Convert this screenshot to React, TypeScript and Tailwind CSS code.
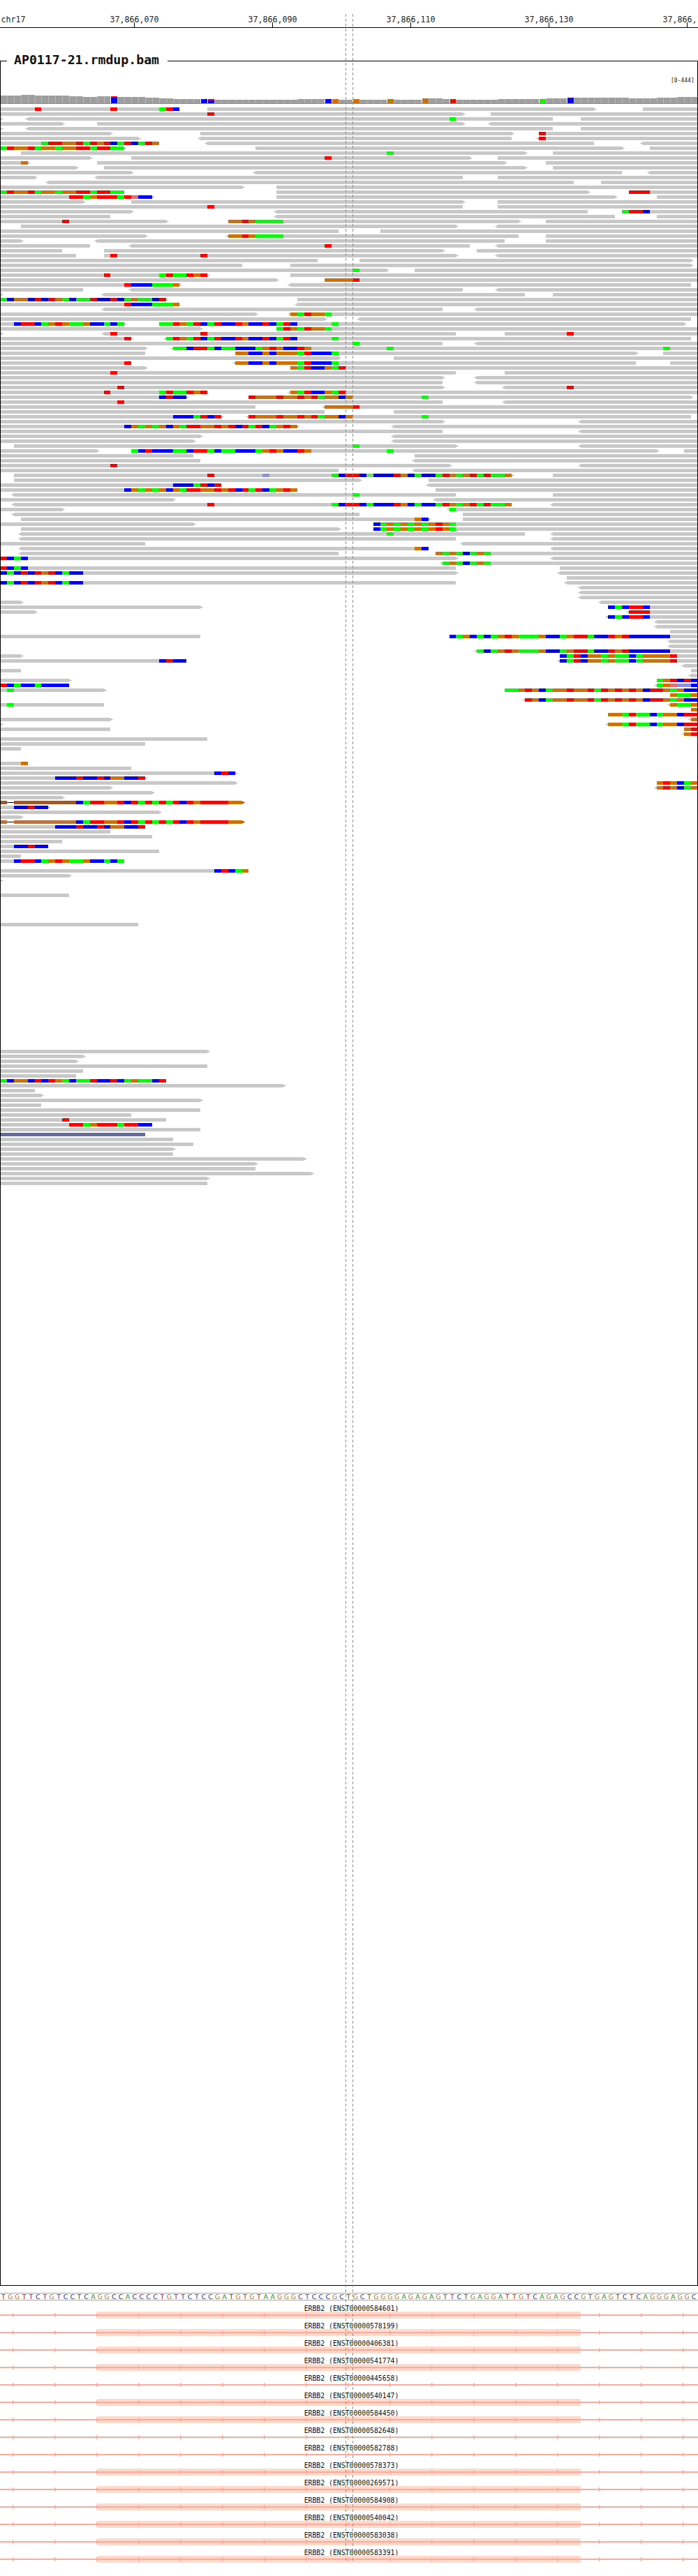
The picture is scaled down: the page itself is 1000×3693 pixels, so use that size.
const COLORS: Record<string, string> = {
  R: '#ff0000',
  G: '#00ff00',
  B: '#0000ff',
  O: '#d17105',
  r: '#e07070',
  b: '#8f8fdc',
  g: '#66e066',
  n: '#a0582a',
  m: '#c0723e',
  s: '#656a9b',
}
const READ_GRAY = '#c8c8c8'

// Alignment rows, one string per 7px line. Coordinates are base indices:
// "a-b" read, "<" / ">" strand tail, "k:RGB" mismatch cells from base k,
// "~k" deletion line, "t35n" coloured tail
const ROWS: string[] = [
  '0-26 5:R 16:R 23:GRB 30-86> 93-101',
  '0-67> 30:R 71-101',
  '0-0> <4-80 65:G 84-101',
  '0-9> 14-67> <71-101',
  '0-0> <4-80 84-101',
  '0-16> 29-74> 78-101 78:R',
  '0-20> <29-74 <78-101 78:R',
  '0-23 6:GRROORGRORBGRBGRO <30-86 <93-101',
  '0-18> 0:GROORGOOGOORRGRRGG 37-90> 94-101',
  '3-76> 56:G 80-101',
  '0-13> 19-68> 47:R 72-101',
  '0-4> 3:O 14-73> 79-101',
  '0-11> 15-76> 80-101',
  '0-19> <37-90 <94-101',
  '0-5> <14-67 72-101',
  '<7-83 87-101',
  '0-35> 40-101',
  '0-18 0:GROORGOOGOORRGRRGG 40-85> 91-101 91:RRR',
  '0-22> 10:RRGORRRGRrBB 40-89> 95-101',
  '0-12> 19-67> 72-101',
  '0-67 30:R 72-101',
  '0-19> <40-85 90-101 90:GRRB',
  '0-16 <40-89 95-101',
  '0-24> 9:R 33-75> 33:OOROGGGG 79-101',
  '3-66> <72-101',
  '0-49 55-101',
  '0-21> <33-75 33:OOROGGGG 79-101',
  '0-3> <14-73 79-101',
  '0-13 <19-68 47:R <72-101',
  '0-9 15-64> 69-101',
  '0-11 15-66> 16:R 29:R <72-101',
  '0-46 52-100>',
  '0-35 42-100>',
  '0-56> 51:G 60-101',
  '0-30> 15:R 23:GRGGROR 42-101',
  '0-40> 47-101 47:OOOOR',
  '0-26> 18:RBBBGGGO <42-100',
  '0-12 <19-67 <72-101',
  '0-0> <15-76 80-101',
  '0-24> 0:GBOOBRBROGBGGRBBRBGOGGBR 43-101',
  '0-26 18:RBBBGGGO <43-101',
  '<15-64 <69-101',
  '0-37> <42-101 42:OGROOG',
  '0-47> <52-100',
  '0-18> 2:BRRBGOROGGOBBGBG 23-99> 23:GGROGRBGRBBROBBRBGRB 48:G',
  '0-29> 40-101 40:GROGROOG',
  '0-0> <15-66 16:R 29:R 73-101 82:R',
  '0-19> 18:R <24-100 24:GROGRBGRBBROBBRBGRB 48:G',
  '0-64 51:G <69-101',
  '0-21> <25-101 25:GGBRRGBGGBBBGOROBBRO 56:G 96:G',
  '0-21 34-92> 34:OOBBOBOOOGRBBBG 96-101',
  '0-49> 57-101',
  '0-19 18:R <34-92 34:OOBBOBOOOGRBBBG 97-101',
  '0-21> 42-101 42:OGRBBOGR',
  '0-66 16:R 73-101',
  '0-64> <69-101',
  '0-64 <69-101',
  '0-64> 17:R <73-101 82:R',
  '0-30 15:R 23:GRGGROR <42-101 42:OGRBBOGR',
  '0-27> 23:BRBB 36-100> 36:ROOOROORORGOOBO 61:G',
  '0-64 17:R <73-101',
  '0-37 <47-101 47:OOOOR',
  '0-47 57-101',
  '0-32> 25:BBBGRBR <36-100 36:ROOOROORORGOOBO 61:G',
  '0-64> <84-101',
  '0-43> 18:BOGOGOBOGRROORORBRGRBGORO <57-101',
  '0-64 <84-101',
  '0-29> <57-101',
  '0-28> <57-101',
  '2-66> 51:G <84-101',
  '0-14> 19-95> 19:GBRBBBGGBRRGBGGBBBGOROBBRO 56:G 99-101',
  '0-28 60-101',
  '0-29 <60-101',
  '0-65> 16:R <84-101',
  '0-49 <60-101',
  '2-74> 30:R 38:b 48:GBRRBgBBBROBGBBGROGORGRGGO 80-101',
  '2-52> 62-101',
  '0-32 25:BBBGRBR <62-101',
  '0-43 18:BOGOGOBOGRROORORBRGRBGORO 63-101',
  '<2-66 51:G 80-101',
  '0-25> <63-101',
  '<2-74 30:R 48:GBRRBGBBBROBGBBGROGORGRGGO <80-101',
  '0-9> <65-101 65:G',
  '<2-52 67-101',
  '3-62> 60:OB 67-101',
  '0-28> 54-101 54:BGOGOGOGOROG',
  '3-49> 54-101 54:BGOGOGOGOROG',
  '<3-76 56:G <80-101',
  '<3-66 <80-101',
  '0-21 <67-101',
  '<3-62 60:OB <80-101',
  '<3-49 63-101 63:OGOGBGOG',
  '0-66> 0:RBGB <80-101',
  '<64-101 64:GOGBGOG',
  '0-66 0:RBGB 81-101',
  '0-66> 0:BGBRBRORBGBB <81-101',
  '82-101',
  '0-66 0:BGBRBRORBGBB <82-101',
  '<84-101',
  '<84-101',
  '<84-101',
  '0-3> <87-101',
  '0-29> 88-101 88:BGBRRB',
  '0-5> <91-101 91:RRR',
  '<88-101 88:BGBRRB',
  '<95-101',
  '<95-101',
  '97-101',
  '0-29 65-101 65:BGOBGBGOROGGGOBBGORRGBBRORBBBBBB',
  '<97-101',
  '<97-101',
  '<69-101 69:GBGOROGGGOBBGORRGBBRORBBBBBB',
  '0-3> 81-101 81:BGRBOOGOGGBGOOOOR',
  '0-27 23:BRBB <81-101 81:BGRBOOGOGGBGOOOOR',
  '<99-101',
  '0-3 100-101',
  '<100-101',
  '0-10> 95-101 95:GORBRB',
  '0-10 0:RBGBBGBBBB <95-101 95:GOrbbB',
  '0-15> 1:G 73-101 73:GGOROBGOOROORGROROROBRROGOBB',
  '97-101 97:OGGO',
  '<76-101 76:ROBGOOROORGROROROBRROGOBB',
  '0-15 1:G <97-101 97:OGGO',
  '100-101 100:O',
  '88-101 88:OOGRGGBGOOBRR',
  '0-16> <100-101 100:O',
  '0-0> <88-101 88:OOGRGGBGOOBRR',
  '0-16 99-101 99:OR',
  '<99-101 99:OR',
  '0-30',
  '0-21',
  '0-3',
  '',
  '',
  '0-4 3:O',
  '0-19',
  '0-34> 31:BRB',
  '0-21> 8:BBBRBBRBOOBBR',
  '0-34> 95-101 95:OROBGO',
  '0-16> <95-101 95:OROBGO',
  '0-22>',
  '0-9>',
  '0:n ~1 2:nnnnnnnnnBGRROORBRGRGRGRBRORRRROO t35n',
  '0-7> 2:BBRBB',
  '0-23>',
  '0-3>',
  '0:m ~1 2:mmmmmmmmmBGRROORBRGRGRGRBRORRRROO t35n',
  '0-21 8:BBBRBBRBOOBBR',
  '0-16',
  '0-22',
  '0-9',
  '0-7 2:BBRBB',
  '0-23',
  '0-3',
  '0-18 2:BRRBGOROGGOBBGBG',
  '',
  '0-36 31:BRBGO',
  '0-10>',
  '0-0>',
  '',
  '',
  '0-10',
  '',
  '',
  '',
  '',
  '',
  '0-20',
  '', '', '', '', '', '', '', '', '', '', '', '', '',
  '', '', '', '', '', '', '', '', '', '', '', '',
  '0-30>',
  '0-12>',
  '0-11>',
  '0-30',
  '0-12',
  '0-11',
  '0-24 0:GBOOBRBROGBGGRBBRBGOGGBR',
  '0-41>',
  '0-5',
  '0-6>',
  '0-29>',
  '0-6',
  '0-29',
  '0-19',
  '0-24 9:R',
  '0-22 10:RRGORRRGRRBB',
  '0-29',
  '0-21 0:sssssssssssssssssssss',
  '0-25',
  '0-28',
  '0-25>',
  '0-25',
  '0-44>',
  '0-37>',
  '0-37',
  '0-45>',
  '0-30>',
  '0-30',
]

const COVERAGE_TOPS = [
  137, 137, 137, 136, 136, 137, 137, 137, 137, 137, 138, 138, 139, 139, 138, 138, 138, 139, 139, 139,
  139, 140, 140, 141, 141, 142, 142, 142, 142, 142, 142, 143, 143, 143, 143, 143, 143, 143, 143, 143,
  143, 143, 143, 142, 142, 142, 142, 142, 142, 143, 143, 142, 143, 143, 143, 143, 142, 143, 143, 143,
  143, 141, 141, 141, 142, 142, 143, 143, 143, 143, 143, 143, 142, 142, 142, 142, 142, 142, 142, 141,
  141, 141, 140, 140, 140, 140, 140, 140, 140, 140, 140, 141, 141, 141, 141, 140, 140, 140, 139, 139,
  139,
]

// Coverage bars with allele colours: fill, colour of the tick on top
const COVERAGE_ALLELES: Record<number, [string, string]> = {
  16: ['B', 'R'],
  29: ['B', 'R'],
  30: ['B', 'R'],
  47: ['B', 'R'],
  48: ['O', 'G'],
  51: ['O', 'G'],
  56: ['O', 'G'],
  61: ['O', 'G'],
  65: ['R', 'G'],
  78: ['G', 'R'],
  82: ['B', 'R'],
}

const SEQUENCE =
  'TGGTTCTGTCCTCAGGCCACCCCTGTTCTCCGATGTGTAAGGGCTCCCGCTGCTGGGGAGAGAGTTCTGAGGATTGTCAGAGCCGTGAGTCTCAGGGAGGC'

const TICKS = [
  { x: 192.5, label: '37,866,070' },
  { x: 390.5, label: '37,866,090' },
  { x: 588.5, label: '37,866,110' },
  { x: 786.5, label: '37,866,130' },
  { x: 984.5, label: '37,866,150' },
]

const TRANSCRIPTS = [
  { id: 'ENST00000584601', exon: true },
  { id: 'ENST00000578199', exon: true },
  { id: 'ENST00000406381', exon: true },
  { id: 'ENST00000541774', exon: true },
  { id: 'ENST00000445658', exon: false },
  { id: 'ENST00000540147', exon: true },
  { id: 'ENST00000584450', exon: true },
  { id: 'ENST00000582648', exon: false },
  { id: 'ENST00000582788', exon: false },
  { id: 'ENST00000578373', exon: true },
  { id: 'ENST00000269571', exon: true },
  { id: 'ENST00000584908', exon: true },
  { id: 'ENST00000540042', exon: true },
  { id: 'ENST00000583038', exon: true },
  { id: 'ENST00000583391', exon: true },
]

const baseX = (k: number) => Math.floor(0.5 + 9.9 * k)

type Box = { x: number; y: number; w: number; h: number; fill: string }

function tailRight(x: number, y: number, fill: string): Box[] {
  return [
    { x, y: y + 1, w: 2, h: 3, fill },
    { x: x + 2, y: y + 2, w: 2, h: 1, fill },
  ]
}

function tailLeft(x: number, y: number, fill: string): Box[] {
  return [
    { x: x - 2, y: y + 1, w: 2, h: 3, fill },
    { x: x - 4, y: y + 2, w: 2, h: 1, fill },
  ]
}

function parseRow(row: string, y: number): Box[] {
  const boxes: Box[] = []
  const cells: Box[] = []
  for (const token of row.split(' ')) {
    const read = token.match(/^(<?)(\d+)-(\d+)(>?)$/)
    const run = token.match(/^(\d+):([A-Za-z]+)$/)
    const gap = token.match(/^~(\d+)$/)
    const tail = token.match(/^t(\d+)([a-z])$/)
    if (read) {
      const x0 = Math.max(baseX(+read[2]), 1)
      const x1 = baseX(+read[3])
      if (x1 > x0) boxes.push({ x: x0, y, w: x1 - x0, h: 5, fill: READ_GRAY })
      if (read[1]) boxes.push(...tailLeft(x0, y, READ_GRAY))
      if (read[4]) boxes.push(...tailRight(Math.max(x1, 1), y, READ_GRAY))
    } else if (run) {
      ;[...run[2]].forEach((c, i) => {
        const k = +run[1] + i
        const x0 = Math.max(baseX(k), 1)
        cells.push({ x: x0, y, w: baseX(k + 1) - x0, h: 5, fill: COLORS[c] })
      })
    } else if (gap) {
      const k = +gap[1]
      boxes.push({ x: baseX(k), y: y + 2, w: 11, h: 1, fill: '#000000' })
    } else if (tail) {
      boxes.push(...tailRight(baseX(+tail[1]), y, tail[2] === 'n' ? COLORS.n : COLORS.m))
    }
  }
  return [...boxes, ...cells]
}

function coverageBoxes(): Box[] {
  const boxes: Box[] = []
  COVERAGE_TOPS.forEach((top, k) => {
    const x0 = baseX(k)
    const w = baseX(k + 1) - x0
    const allele = COVERAGE_ALLELES[k]
    if (allele) {
      const capH = k === 16 || k === 30 ? 2 : 0
      boxes.push({ x: x0 + 1, y: top, w: w - 1, h: 148 - top, fill: COLORS[allele[0]] })
      if (capH) boxes.push({ x: x0 + 1, y: top, w: w - 1, h: capH, fill: COLORS[allele[1]] })
      else boxes.push({ x: x0 + 4, y: top, w: 1, h: 1, fill: COLORS[allele[1]] })
    } else {
      boxes.push({ x: x0, y: top, w, h: 148 - top, fill: '#b8b8b8' })
      boxes.push({ x: x0 + 1, y: top, w: w - 1, h: 148 - top, fill: '#9e9e9e' })
    }
  })
  return boxes
}

const alignmentBoxes: Box[] = ROWS.flatMap((row, i) => (row ? parseRow(row, 154 + 7 * i) : []))
const depthBoxes = coverageBoxes()

function Ruler() {
  return (
    <svg width="1000" height="40" className="block text-[#222] font-['DejaVu_Sans_Mono',monospace]">
      <text x="1.5" y="32" fontSize="11.6" fill="currentColor">chr17</text>
      {TICKS.map((t) => (
        <g key={t.label}>
          <text x={t.x} y="32" fontSize="11.6" fill="currentColor" textAnchor="middle">{t.label}</text>
          <rect x={t.x - 0.5} y="32" width="1" height="7" fill="#000" />
        </g>
      ))}
      <rect x="0" y="39" width="1000" height="1" fill="#000" />
    </svg>
  )
}

function Pileup() {
  return (
    <svg width="998" height="1620" viewBox="1 88 998 1620" shapeRendering="crispEdges" className="block">
      <text x="961" y="117.5" fontSize="8" fill="#222" className="font-['DejaVu_Sans_Mono',monospace]">[0-444]</text>
      {depthBoxes.map((b, i) => (
        <rect key={i} x={b.x} y={b.y} width={b.w} height={b.h} fill={b.fill} />
      ))}
      <rect x="1" y="148" width="998" height="1" fill="#8c8c8c" />
      {alignmentBoxes.map((b, i) => (
        <rect key={i} x={b.x} y={b.y} width={b.w} height={b.h} fill={b.fill} />
      ))}
    </svg>
  )
}

function baseColor(base: string) {
  if (base === 'T') return 'text-[#b01818]'
  if (base === 'G') return 'text-[#b0762e]'
  if (base === 'C') return 'text-[#2a2a9a]'
  return 'text-[#0a9a0a]'
}

function GeneTrack({ exon }: { exon: boolean }) {
  const marks = Array.from({ length: 17 }, (_, i) => 18 + 60 * i)
  return (
    <svg width="1000" height="10" className="block">
      {exon && <rect x="139" y="0" width="693" height="10" fill="#ffdacb" />}
      <rect x="0" y="4" width="1000" height="2" fill="#ffa89c" />
      {marks.map((x) => (
        <polygon key={x} points={`${x},1.5 ${x + 3},5 ${x},8.5`} fill="#ffa89c" />
      ))}
    </svg>
  )
}

export default function App() {
  return (
    <div className="relative w-[1000px] h-[3693px] bg-white overflow-hidden font-['DejaVu_Sans_Mono',monospace]">
      <Ruler />

      {/* Alignment track */}
      <section className="relative mt-[47px] h-[3190px] border border-black">
        <h2 className="absolute left-[9px] top-[-12px] w-[230px] pl-[10px] bg-white text-[18.2px] leading-[20px] font-bold text-[#111] whitespace-nowrap">
          AP0117-21.rmdup.bam
        </h2>
        <Pileup />
      </section>

      {/* Reference sequence */}
      <div className="flex mt-[10px] h-[11px] border-y border-[#a8a8a8] overflow-hidden font-['DejaVu_Sans',sans-serif]">
        {[...SEQUENCE].map((base, i) => (
          <span key={i} className={`w-[9.9px] shrink-0 text-center text-[9.5px] leading-[9px] ${baseColor(base)}`}>
            {base}
          </span>
        ))}
      </div>

      {/* Transcripts */}
      <div className="flex flex-col gap-[4px] mt-[5px]">
        {TRANSCRIPTS.map((t) => (
          <div key={t.id}>
            <p className="h-[11px] pl-[7px] text-center text-[9.8px] leading-[13px] text-[#111] whitespace-nowrap">
              ERBB2 ({t.id})
            </p>
            <GeneTrack exon={t.exon} />
          </div>
        ))}
      </div>

      {/* Center guide lines */}
      <div className="absolute left-[495px] top-[20px] w-px h-[3652px] bg-[repeating-linear-gradient(to_bottom,#909090_0,#909090_4px,transparent_4px,transparent_7px)]" />
      <div className="absolute left-[505px] top-[20px] w-px h-[3652px] bg-[repeating-linear-gradient(to_bottom,#909090_0,#909090_4px,transparent_4px,transparent_7px)]" />
    </div>
  )
}
